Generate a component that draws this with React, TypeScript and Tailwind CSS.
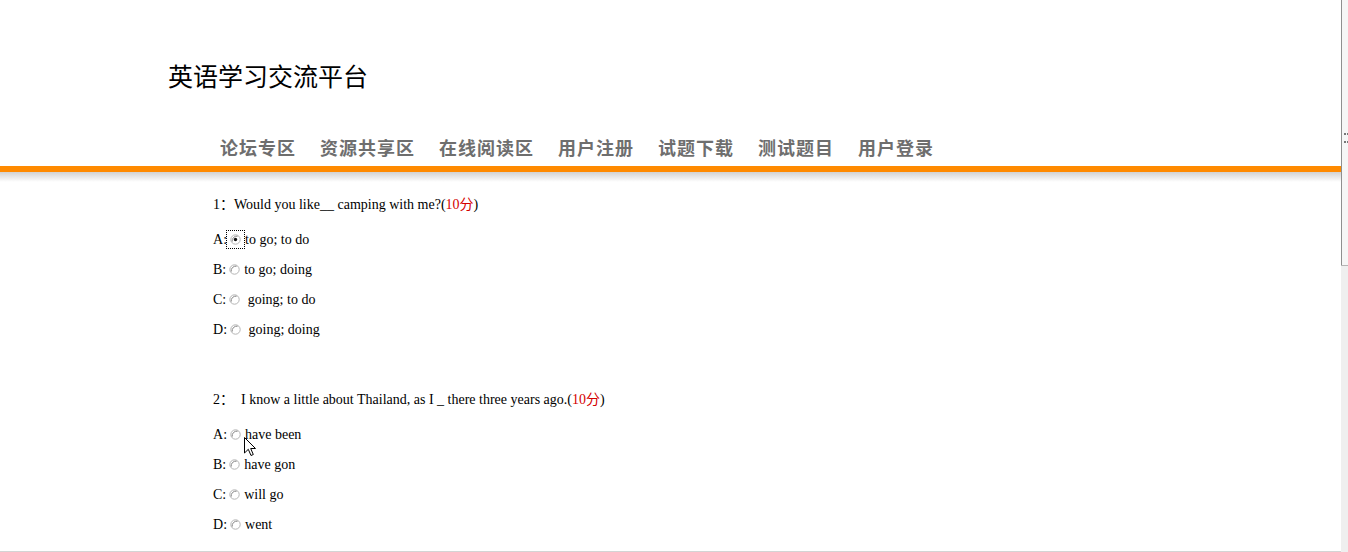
import React from 'react';

type Option = { key: string; text: string; checked?: boolean; focused?: boolean };

const questions: { no: string; text: string; options: Option[] }[] = [
  {
    no: '1：',
    text: 'Would you like__ camping with me?',
    options: [
      { key: 'A', text: 'to go; to do', checked: true, focused: true },
      { key: 'B', text: 'to go; doing' },
      { key: 'C', text: ' going; to do' },
      { key: 'D', text: ' going; doing' },
    ],
  },
  {
    no: '2：  ',
    text: 'I know a little about Thailand, as I _ there three years ago.',
    options: [
      { key: 'A', text: 'have been' },
      { key: 'B', text: 'have gon' },
      { key: 'C', text: 'will go' },
      { key: 'D', text: 'went' },
    ],
  },
];

const navItems = ['论坛专区', '资源共享区', '在线阅读区', '用户注册', '试题下载', '测试题目', '用户登录'];

function Radio({ checked, focused }: { checked?: boolean; focused?: boolean }) {
  return (
    <span
      className={`inline-flex w-[11px] h-[11px] ml-[3px] mr-[4px] ${
        focused ? 'outline-1 outline-dotted outline-black outline-offset-[3px]' : ''
      }`}
    >
      <svg width="11" height="11" viewBox="0 0 11 11">
        <circle cx="5.5" cy="5.5" r="4.7" fill="#fff" stroke="#b4b4b4" strokeWidth="1" />
        <path d="M2.2 7.6 A4.7 4.7 0 0 1 7.6 2.2" fill="none" stroke="#858585" strokeWidth="1" />
        {checked && <circle cx="5.5" cy="5.5" r="1.7" fill="#111" />}
      </svg>
    </span>
  );
}

export default function App() {
  return (
    <div className="relative flex w-[1348px] h-[552px] overflow-hidden bg-white">
      <div className="w-[1341px] h-full border-b border-[#d4d4d4] flex flex-col">
        {/* header */}
        <h1
          className="pl-[168px] pt-[63px] text-[25px] leading-[25px] font-normal text-black"
          style={{ fontFamily: '"Noto Sans CJK SC", "Noto Sans", sans-serif' }}
        >
          英语学习交流平台
        </h1>

        <nav
          className="flex gap-[24px] pl-[220px] mt-[50px] text-[18px] leading-[18px] font-bold text-[#6e6e6e] tracking-[1px]"
          style={{ fontFamily: '"Noto Sans CJK SC", sans-serif' }}
        >
          {navItems.map((item) => (
            <span key={item}>{item}</span>
          ))}
        </nav>

        <div className="mt-[10px] h-[6px] bg-[#ff8a00]" />
        <div className="h-[10px] bg-gradient-to-b from-[#d2d2d2] to-white" />

        {/* questions */}
        <div
          className="pl-[213px] pt-[8px] text-[14px] text-black flex flex-col gap-[41px]"
          style={{ fontFamily: '"Liberation Serif", "Noto Sans CJK SC", serif' }}
        >
          {questions.map((q) => (
            <div key={q.no}>
              <p className="leading-[30px] mb-[4px] whitespace-pre">
                {q.no}
                {q.text}(<span className="text-[#d40000]">10分</span>)
              </p>
              {q.options.map((o) => (
                <div key={o.key} className="flex items-center h-[30px] whitespace-pre">
                  <span>{o.key}:</span>
                  <Radio checked={o.checked} focused={o.focused} />
                  <span>{o.text}</span>
                </div>
              ))}
            </div>
          ))}
        </div>
      </div>

      {/* scrollbar */}
      <div className="w-[7px] h-full flex flex-col">
        <div className="h-[265px] border-l border-[#8f8f8f] bg-[#f6f6f6] flex items-start pt-[133px] pl-[2px]">
          <div className="w-[3px] h-[10px] border-y-2 border-dotted border-[#777]" />
        </div>
        <div className="flex-1 border-t border-[#b4b4b4] bg-[#efefef]" />
      </div>

      {/* mouse pointer */}
      <svg className="absolute left-[244px] top-[437px]" width="13" height="20" viewBox="0 0 13 20">
        <path d="M0.5 0.5 L0.5 16 L4.3 12.3 L7 18.5 L9.3 17.5 L6.7 11.5 L11.5 11.5 Z" fill="#fff" stroke="#000" strokeWidth="1" />
      </svg>
    </div>
  );
}
